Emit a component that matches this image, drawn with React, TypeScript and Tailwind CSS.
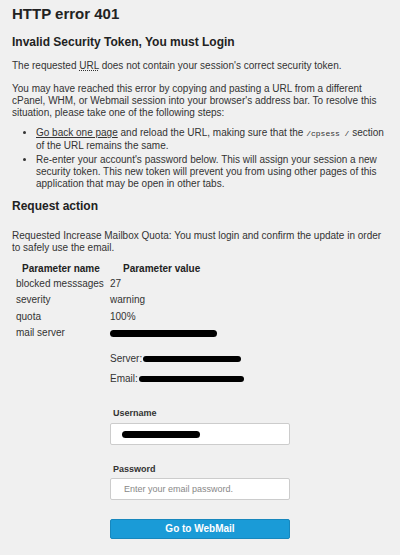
import React from "react";

const Blob = ({ className }: { className: string }) => (
  <span className={`inline-block rounded-full bg-black align-middle ${className}`} />
);

const params = [
  { name: "blocked messsages", value: "27" },
  { name: "severity", value: "warning" },
  { name: "quota", value: "100%" },
];

export default function App() {
  return (
    <div className="min-h-[555px] w-[400px] bg-[#f0f0f0] px-3 pt-[3px] font-['Liberation_Sans',Arial,sans-serif] text-[10px] leading-[12px] text-[#333]">
      <h1 className="text-[15px] font-bold leading-[22px] text-[#222]">HTTP error 401</h1>
      <h2 className="mt-[9px] text-[12px] font-bold leading-[16px] text-[#222]">
        Invalid Security Token, You must Login
      </h2>
      <p className="mt-[10px]">
        The requested <span className="underline decoration-dotted">URL</span> does not contain your
        session's correct security token.
      </p>
      <p className="mt-[11px]">
        You may have reached this error by copying and pasting a URL from a different cPanel, WHM, or
        Webmail session into your browser's address bar. To resolve this situation, please take one of
        the following steps:
      </p>
      <ul className="mt-[8px] list-disc pl-[24px] leading-[12px]">
        <li>
          <a href="#" className="text-[#333] underline">
            Go back one page
          </a>{" "}
          and reload the URL, making sure that the{" "}
          <code className="font-['Liberation_Mono',monospace] text-[8px]">/cpsess /</code> section of
          the URL remains the same.
        </li>
        <li className="mt-[2px]">
          Re-enter your account's password below. This will assign your session a new security token.
          This new token will prevent you from using other pages of this application that may be open
          in other tabs.
        </li>
      </ul>
      <h3 className="mt-[8px] text-[12px] font-bold leading-[16px] text-[#222]">Request action</h3>
      <p className="mt-[16px]">
        Requested Increase Mailbox Quota: You must login and confirm the update in order to safely use
        the email.
      </p>

      <table className="ml-[4px] mt-[7px] border-separate border-spacing-0">
        <thead>
          <tr className="h-[15px]">
            <th className="w-[94px] px-[6px] text-left font-bold text-[#222]">Parameter name</th>
            <th className="pl-[13px] text-left font-bold text-[#222]">Parameter value</th>
          </tr>
        </thead>
        <tbody>
          {params.map((p) => (
            <tr key={p.name} className="h-[16.3px]">
              <td className="pr-[4px]">{p.name}</td>
              <td>{p.value}</td>
            </tr>
          ))}
          <tr className="h-[16.3px]">
            <td>mail server</td>
            <td>
              <Blob className="h-[7px] w-[107px]" />
            </td>
          </tr>
        </tbody>
      </table>

      <div className="ml-[98px] mt-[12px] flex flex-col gap-[8px]">
        <div className="flex items-center">
          Server: <Blob className="ml-[1px] h-[6px] w-[98px]" />
        </div>
        <div className="flex items-center">
          Email: <Blob className="ml-[1px] h-[6px] w-[105px]" />
        </div>
      </div>

      <form className="ml-[98px] mt-[23px] w-[180px]">
        <label className="ml-[3px] block text-[9px] font-bold leading-[11px] text-[#333]">Username</label>
        <div className="mt-[4px] flex h-[22px] items-center rounded-[2px] border border-[#ccc] bg-white px-[11px]">
          <Blob className="h-[7px] w-[78px]" />
        </div>
        <label className="ml-[3px] mt-[19px] block text-[9px] font-bold leading-[11px] text-[#333]">
          Password
        </label>
        <input
          type="password"
          placeholder="Enter your email password."
          className="mt-[3px] block h-[22px] w-full rounded-[2px] border border-[#ccc] bg-white px-[13px] text-[9px] placeholder:text-[#888] outline-none"
        />
        <button
          type="button"
          className="mt-[19px] h-[20px] w-full rounded-[2px] border border-[#1787bd] bg-[#1a9bd7] text-[10px] font-bold text-white"
        >
          Go to WebMail
        </button>
      </form>
    </div>
  );
}
